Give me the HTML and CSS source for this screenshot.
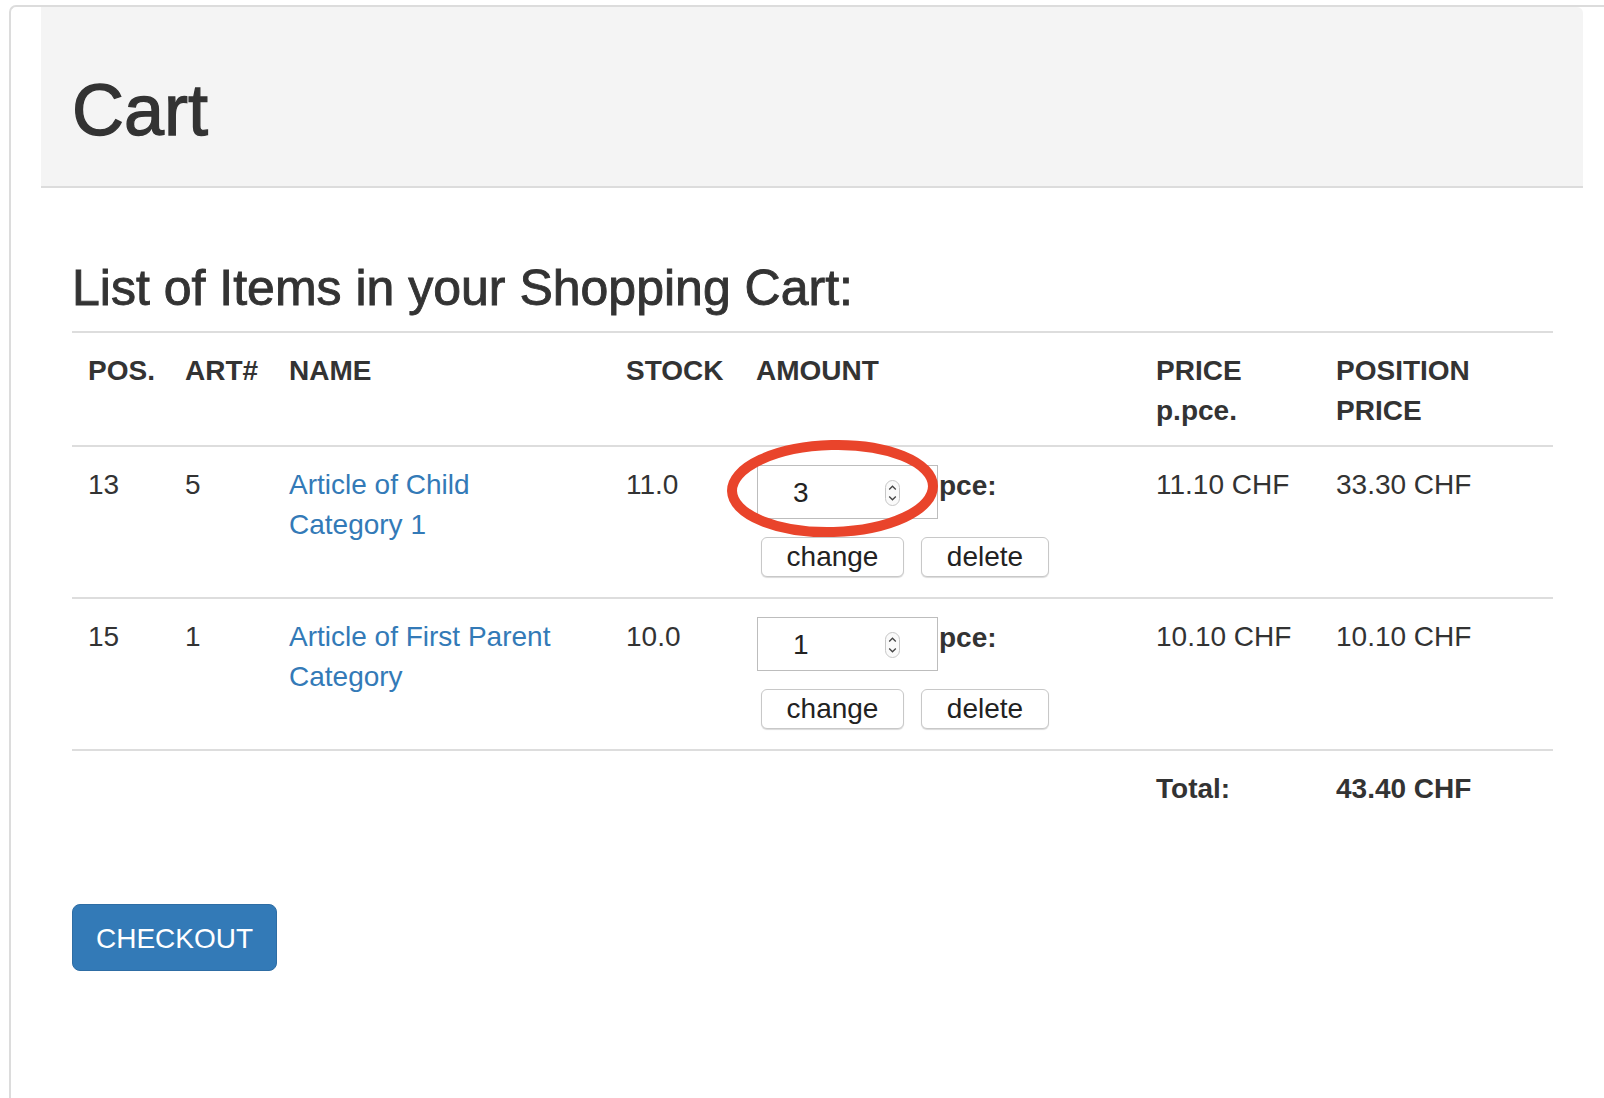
FILE: index.html
```html
<!DOCTYPE html>
<html lang="en">
<head>
<meta charset="utf-8">
<title>Cart</title>
<link rel="stylesheet" href="styles.css">
</head>
<body>
<div class="frame">
  <div class="jumbotron">
    <h1 class="title">Cart</h1>
  </div>
  <div class="content">
    <h2 class="subtitle">List of Items in your Shopping Cart:</h2>
    <table class="cart-table">
      <colgroup>
        <col class="col-pos">
        <col class="col-art">
        <col class="col-name">
        <col class="col-stock">
        <col class="col-amount">
        <col class="col-price">
        <col class="col-total">
      </colgroup>
      <thead>
        <tr>
          <th>POS.</th>
          <th>ART#</th>
          <th>NAME</th>
          <th>STOCK</th>
          <th>AMOUNT</th>
          <th>PRICE p.pce.</th>
          <th>POSITION PRICE</th>
        </tr>
      </thead>
      <tbody>
        <tr>
          <td>13</td>
          <td>5</td>
          <td><a class="article-link" href="#">Article of Child Category 1</a></td>
          <td>11.0</td>
          <td>
            <div class="amount">
              <div class="amount-top">
                <div class="qty">3
                  <svg class="spinner" width="15" height="26" viewBox="0 0 15 26"><rect x="0.5" y="0.5" width="14" height="25" rx="7" fill="#fafafa" stroke="#c6c6c6"/><polyline points="4.2,9.5 7.5,6.2 10.8,9.5" fill="none" stroke="#444" stroke-width="1.3"/><polyline points="4.2,16.5 7.5,19.8 10.8,16.5" fill="none" stroke="#444" stroke-width="1.3"/></svg>
                </div>
                <span class="pce">pce:</span>
              </div>
              <div class="amount-buttons">
                <button class="btn btn-change">change</button>
                <button class="btn btn-delete">delete</button>
              </div>
              <svg class="highlight" width="216" height="106" viewBox="0 0 216 106"><ellipse cx="107.5" cy="52.5" rx="100.5" ry="43.5" fill="none" stroke="#e9442b" stroke-width="10" transform="rotate(-1.5 107.5 52.5)"/></svg>
            </div>
          </td>
          <td>11.10 CHF</td>
          <td>33.30 CHF</td>
        </tr>
        <tr>
          <td>15</td>
          <td>1</td>
          <td><a class="article-link" href="#">Article of First Parent Category</a></td>
          <td>10.0</td>
          <td>
            <div class="amount">
              <div class="amount-top">
                <div class="qty">1
                  <svg class="spinner" width="15" height="26" viewBox="0 0 15 26"><rect x="0.5" y="0.5" width="14" height="25" rx="7" fill="#fafafa" stroke="#c6c6c6"/><polyline points="4.2,9.5 7.5,6.2 10.8,9.5" fill="none" stroke="#444" stroke-width="1.3"/><polyline points="4.2,16.5 7.5,19.8 10.8,16.5" fill="none" stroke="#444" stroke-width="1.3"/></svg>
                </div>
                <span class="pce">pce:</span>
              </div>
              <div class="amount-buttons">
                <button class="btn btn-change">change</button>
                <button class="btn btn-delete">delete</button>
              </div>
            </div>
          </td>
          <td>10.10 CHF</td>
          <td>10.10 CHF</td>
        </tr>
        <tr class="total-row">
          <td></td>
          <td></td>
          <td></td>
          <td></td>
          <td></td>
          <td class="strong">Total:</td>
          <td class="strong">43.40 CHF</td>
        </tr>
      </tbody>
    </table>
    <div class="checkout-wrap">
      <button class="btn-checkout">CHECKOUT</button>
    </div>
  </div>
</div>
</body>
</html>
```

FILE: styles.css
```css
* {
  box-sizing: border-box;
}

html,
body {
  margin: 0;
  padding: 0;
}

body {
  font-family: "Liberation Sans", Arial, Helvetica, sans-serif;
  font-size: 28px;
  line-height: 40px;
  color: #333;
  background: #fff;
  overflow: hidden;
}

.frame {
  margin: 5px 0 0 9px;
  height: 1093px;
  border-top: 2px solid #dcdcdc;
  border-left: 2px solid #dcdcdc;
  border-top-left-radius: 7px;
}

.jumbotron {
  margin: 0 21px 0 30px;
  height: 181px;
  padding: 63px 0 0 31px;
  background: #f4f4f4;
  border-bottom: 2px solid #dcdcdc;
  border-top-right-radius: 6px;
}

.title {
  margin: 0;
  font-size: 72px;
  line-height: 80px;
  font-weight: normal;
  color: #333;
  -webkit-text-stroke: 1.3px #333;
}

.content {
  padding: 0 30px 0 61px;
}

.subtitle {
  margin: 73px 0 15px;
  font-size: 50px;
  line-height: 55px;
  font-weight: normal;
  color: #333;
  -webkit-text-stroke: 0.9px #333;
}

.cart-table {
  width: 1481px;
  border-collapse: collapse;
  table-layout: fixed;
}

.col-pos { width: 97px; }
.col-art { width: 104px; }
.col-name { width: 337px; }
.col-stock { width: 130px; }
.col-amount { width: 400px; }
.col-price { width: 180px; }
.col-total { width: 233px; }

.cart-table th,
.cart-table td {
  padding: 18px 16px 20px;
  text-align: left;
  vertical-align: top;
}

.cart-table th {
  font-weight: bold;
  padding-bottom: 14px;
  border-top: 2px solid #dddddd;
  border-bottom: 2px solid #dddddd;
}

.cart-table td {
  border-top: 2px solid #dddddd;
}

.article-link {
  display: block;
  max-width: 285px;
  color: #337ab7;
  text-decoration: none;
}

.strong {
  font-weight: bold;
}

.amount {
  position: relative;
}

.amount-top {
  display: flex;
  align-items: flex-start;
}

.qty {
  position: relative;
  width: 181px;
  height: 54px;
  margin-left: 1px;
  padding: 2px 0 0 35px;
  line-height: 50px;
  border: 1px solid #bdbdbd;
  background: #fff;
  color: #222;
}

.spinner {
  position: absolute;
  left: 127px;
  top: 14px;
}

.pce {
  font-weight: bold;
  margin: 1px 0 0 1px;
}

.amount-buttons {
  display: flex;
  gap: 17px;
  margin: 18px 0 0 5px;
}

.btn {
  height: 40px;
  padding: 0;
  border: 1px solid #c8c8c8;
  border-radius: 6px;
  background: #fff;
  box-shadow: 0 1px 1px rgba(0, 0, 0, 0.15);
  font: inherit;
  line-height: 38px;
  color: #222;
}

.btn-change {
  width: 143px;
}

.btn-delete {
  width: 128px;
}

.highlight {
  position: absolute;
  left: -31px;
  top: -29px;
  z-index: 2;
}

.checkout-wrap {
  margin-top: 75px;
}

.btn-checkout {
  display: block;
  padding: 14px 23px 11px;
  border: 1px solid #2e6da4;
  border-radius: 8px;
  background: #337ab7;
  color: #fff;
  font: inherit;
  line-height: 40px;
}
```
